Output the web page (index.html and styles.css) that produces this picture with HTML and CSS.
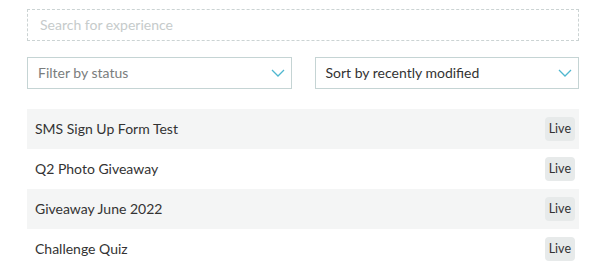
FILE: index.html
```html
<!DOCTYPE html>
<html lang="en">
<head>
    <meta charset="UTF-8">
    <title>Experiences</title>
    <link rel="stylesheet" href="styles.css">
</head>
<body>
    <div class="container">
        <input class="search" type="text" placeholder="Search for experience">

        <div class="filters">
            <div class="select muted">
                <span>Filter by status</span>
                <svg class="chevron" viewBox="0 0 14 8" width="14" height="8"><path d="M1 1l6 6 6-6" fill="none" stroke="#4fb7cf" stroke-width="1.3"/></svg>
            </div>
            <div class="select">
                <span>Sort by recently modified</span>
                <svg class="chevron" viewBox="0 0 14 8" width="14" height="8"><path d="M1 1l6 6 6-6" fill="none" stroke="#4fb7cf" stroke-width="1.3"/></svg>
            </div>
        </div>

        <div class="list">
            <div class="row">
                <span class="name">SMS Sign Up Form Test</span>
                <span class="badge">Live</span>
            </div>
            <div class="row">
                <span class="name">Q2 Photo Giveaway</span>
                <span class="badge">Live</span>
            </div>
            <div class="row">
                <span class="name">Giveaway June 2022</span>
                <span class="badge">Live</span>
            </div>
            <div class="row">
                <span class="name">Challenge Quiz</span>
                <span class="badge">Live</span>
            </div>
        </div>
    </div>
</body>
</html>
```

FILE: styles.css
```css
* {
    margin: 0;
    padding: 0;
    box-sizing: border-box;
}

body {
    font-family: 'Lato', 'Liberation Sans', sans-serif;
    font-size: 14px;
    color: #333;
    background-color: #fff;
}

.container {
    width: 552px;
    margin-left: 27px;
    padding-top: 9px;
}

.search {
    display: block;
    width: 100%;
    height: 32px;
    padding: 0 12px 2px;
    border: 1px dashed #cbd3d3;
    font-family: inherit;
    font-size: 14px;
    color: #333;
    outline: none;
}

.search::placeholder {
    color: #c6cbcb;
}

.filters {
    display: flex;
    gap: 23px;
    margin-top: 16px;
}

.select {
    flex: 1;
    height: 32px;
    display: flex;
    align-items: center;
    justify-content: space-between;
    padding: 0 6px 0 10px;
    border: 1px solid #c5d4d4;
}

.select span {
    padding-bottom: 1px;
}

.select.muted {
    color: #7a7d7d;
}

.list {
    margin-top: 20px;
}

.row {
    height: 40px;
    display: flex;
    align-items: center;
    justify-content: space-between;
    padding: 0 4px 0 8px;
}

.row .name {
    padding-bottom: 2px;
}

.row:nth-child(odd) {
    background-color: #f4f5f5;
}

.badge {
    background-color: #e7eaea;
    border-radius: 4px;
    padding: 4px 4px;
    font-size: 12.5px;
    line-height: 16px;
    color: #333;
}
```
